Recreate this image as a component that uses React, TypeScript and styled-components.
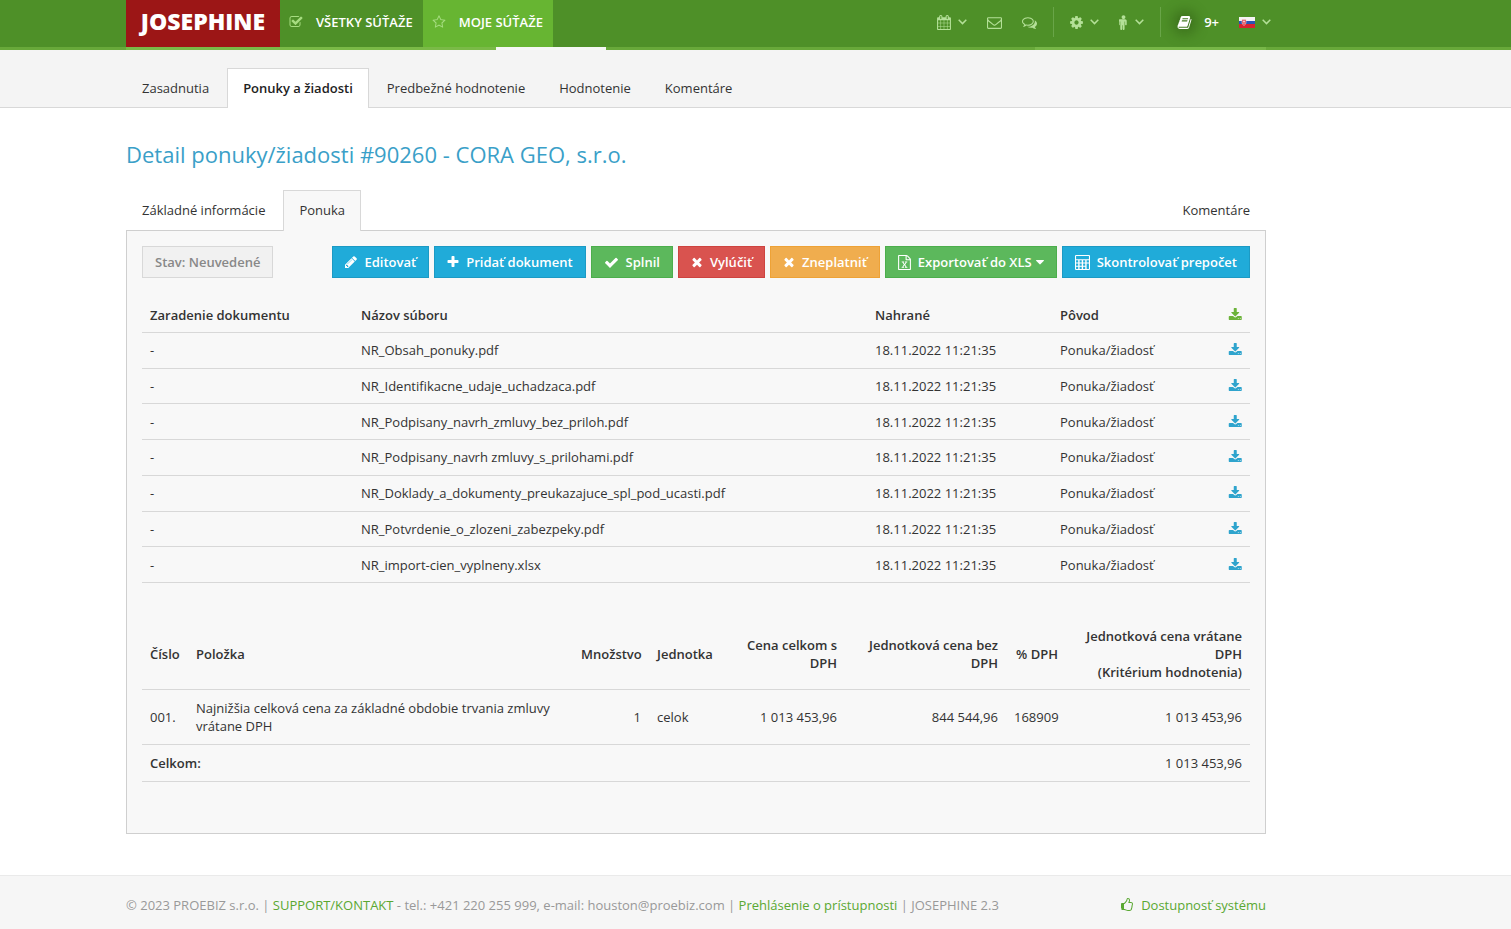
import React from "react";
import styled, { createGlobalStyle, css } from "styled-components";

const GlobalStyle = createGlobalStyle`
  *, *::before, *::after { box-sizing: border-box; }
  html, body, #root { height: 100%; }
  body {
    margin: 0;
    background: #ffffff;
    color: #333333;
    font: 13px/18px "Open Sans", "Noto Sans", sans-serif;
  }
  a { text-decoration: none; color: inherit; }
  button { font: inherit; cursor: pointer; }
`;

/* ---------- icons (1792-unit grid) ---------- */

const paths = {
  check:
    "M1671 566q0 40-28 68l-724 724-136 136q-28 28-68 28t-68-28l-136-136-362-362q-28-28-28-68t28-68l136-136q28-28 68-28t68 28l294 295 656-657q28-28 68-28t68 28l136 136q28 28 28 68z",
  plus:
    "M1600 736v192q0 40-28 68t-68 28h-416v416q0 40-28 68t-68 28h-192q-40 0-68-28t-28-68v-416h-416q-40 0-68-28t-28-68v-192q0-40 28-68t68-28h416v-416q0-40 28-68t68-28h192q40 0 68 28t28 68v416h416q40 0 68 28t28 68z",
  times:
    "M1490 1322q0 40-28 68l-136 136q-28 28-68 28t-68-28l-294-294-294 294q-28 28-68 28t-68-28l-136-136q-28-28-28-68t28-68l294-294-294-294q-28-28-28-68t28-68l136-136q28-28 68-28t68 28l294 294 294-294q28-28 68-28t68 28l136 136q28 28 28 68t-28 68l-294 294 294 294q28 28 28 68z",
  pencil:
    "M491 1536l91-91-235-235-91 91v107h128v128h107zm523-928q0-22-22-22-10 0-17 7l-542 542q-7 7-7 17 0 22 22 22 10 0 17-7l542-542q7-7 7-17zm-54-192l416 416-832 832h-416v-416zm683 96q0 53-37 90l-166 166-416-416 166-165q36-38 90-38 53 0 91 38l235 234q37 39 37 91z",
  caret: "M1408 704q0 26-19 45l-448 448q-19 19-45 19t-45-19l-448-448q-19-19-19-45t19-45 45-19h896q26 0 45 19t19 45z",
  cog:
    "M1152 896q0-106-75-181t-181-75-181 75-75 181 75 181 181 75 181-75 75-181zm512-109v222q0 12-8 23t-20 13l-185 28q-19 54-39 91 35 50 107 138 10 12 10 25t-9 23q-27 37-99 108t-94 71q-12 0-26-9l-138-108q-44 23-91 38-16 136-29 186-7 28-36 28h-222q-14 0-24.5-8.5t-11.5-21.5l-28-184q-49-16-90-37l-141 107q-10 9-25 9-14 0-25-11-126-114-165-168-7-10-7-23 0-12 8-23 15-21 51-66.5t54-70.5q-27-50-41-99l-183-27q-13-2-21-12.5t-8-23.5v-222q0-12 8-23t19-13l186-28q14-46 39-92-40-57-107-138-10-12-10-24 0-10 9-23 26-36 98.5-107.5t94.5-71.5q13 0 26 10l138 107q44-23 91-38 16-136 29-186 7-28 36-28h222q14 0 24.5 8.5t11.5 21.5l28 184q49 16 90 37l142-107q9-9 24-9 13 0 25 10 129 119 165 170 7 8 7 22 0 12-8 23-15 21-51 66.5t-54 70.5q26 50 41 98l183 28q13 2 21 12.5t8 23.5z",
  envelope:
    "M1664 1504v-768q-32 36-69 66-268 206-426 338-51 43-83 67t-86.5 48.5-102.5 24.5h-2q-48 0-102.5-24.5t-86.5-48.5-83-67q-158-132-426-338-37-30-69-66v768q0 13 9.5 22.5t22.5 9.5h1472q13 0 22.5-9.5t9.5-22.5zm0-1051v-24.5l-.5-13-3-12.5-5.5-9-9-7.5-14-2.5h-1472q-13 0-22.5 9.5t-9.5 22.5q0 168 147 284 193 152 401 317 6 5 35 29.5t46 37.5 44.5 31.5 50.5 27.5 43 9h2q20 0 43-9t50.5-27.5 44.5-31.5 46-37.5 35-29.5q208-165 401-317 54-43 100.5-115.5t46.5-131.5zm128-37v1088q0 66-47 113t-113 47h-1472q-66 0-113-47t-47-113v-1088q0-66 47-113t113-47h1472q66 0 113 47t47 113z",
  comments:
    "M704 384q-153 0-286 52t-211.5 141-78.5 191q0 82 53 158t149 132l97 56-35 84q34-20 62-39l44-31 53 10q78 14 153 14 153 0 286-52t211.5-141 78.5-191-78.5-191-211.5-141-286-52zm0-128q191 0 353.5 68.5t256.5 186.5 94 257-94 257-256.5 186.5-353.5 68.5q-86 0-176-16-124 88-278 128-36 9-86 16h-3q-11 0-20.5-8t-11.5-21q-1-3-1-6.5t.5-6.5 2-6l2.5-5 3.5-5.5 4-5 4.5-5 4-4.5q5-6 23-25t26-29.5 22.5-29 25-38.5 20.5-44q-124-72-195-177t-71-224q0-139 94-257t256.5-186.5 353.5-68.5zm822 1169q10 24 20.5 44t25 38.5 22.5 29 26 29.5 23 25q1 1 4 4.5t4.5 5 4 5 3.5 5.5l2.5 5 2 6 .5 6.5-1 6.5q-3 14-13 22t-22 7q-50-7-86-16-154-40-278-128-90 16-176 16-271 0-472-132 58 4 88 4 161 0 309-45t264-129q125-92 192-212t67-254q0-77-23-152 129 71 204 178t75 230q0 120-71 224.5t-195 176.5z",
  star:
    "M1201 1004l306-297-422-62-189-382-189 382-422 62 306 297-73 421 378-199 377 199zm527-357q0 22-26 48l-363 354 86 500q1 7 1 20 0 50-41 50-19 0-40-12l-449-236-449 236q-22 12-40 12-21 0-31.5-14.5t-10.5-35.5q0-6 2-20l86-500-364-354q-25-27-25-48 0-37 56-46l502-73 225-455q19-41 49-41t49 41l225 455 502 73q56 9 56 46z",
  checkSquare:
    "M1472 930v318q0 119-84.5 203.5t-203.5 84.5h-832q-119 0-203.5-84.5t-84.5-203.5v-832q0-119 84.5-203.5t203.5-84.5h832q63 0 117 25 15 7 18 23 3 17-9 29l-49 49q-10 10-23 10-3 0-9-2-23-6-45-6h-832q-66 0-113 47t-47 113v832q0 66 47 113t113 47h832q66 0 113-47t47-113v-254q0-13 9-22l64-64q10-10 23-10 6 0 12 3 20 8 20 29zm231-489l-814 814q-24 24-57 24t-57-24l-430-430q-24-24-24-57t24-57l110-110q24-24 57-24t57 24l263 263 647-647q24-24 57-24t57 24l110 110q24 24 24 57t-24 57z",
  calendar:
    "M192 1664h288v-288h-288v288zm352 0h320v-288h-320v288zm-352-352h288v-320h-288v320zm352 0h320v-320h-320v320zm-352-384h288v-288h-288v288zm736 736h320v-288h-320v288zm-384-736h320v-288h-320v288zm768 736h288v-288h-288v288zm-384-352h320v-320h-320v320zm-352-864v-288q0-13-9.5-22.5t-22.5-9.5h-64q-13 0-22.5 9.5t-9.5 22.5v288q0 13 9.5 22.5t22.5 9.5h64q13 0 22.5-9.5t9.5-22.5zm736 864h288v-320h-288v320zm-384-384h320v-288h-320v288zm384 0h288v-288h-288v288zm32-480v-288q0-13-9.5-22.5t-22.5-9.5h-64q-13 0-22.5 9.5t-9.5 22.5v288q0 13 9.5 22.5t22.5 9.5h64q13 0 22.5-9.5t9.5-22.5zm384-64v1280q0 52-38 90t-90 38h-1408q-52 0-90-38t-38-90v-1280q0-52 38-90t90-38h128v-96q0-66 47-113t113-47h64q66 0 113 47t47 113v96h384v-96q0-66 47-113t113-47h64q66 0 113 47t47 113v96h128q52 0 90 38t38 90z",
  male:
    "M1280 704v416q0 40-28 68t-68 28-68-28-28-68v-352h-64v912q0 46-33 79t-79 33-79-33-33-79v-464h-64v464q0 46-33 79t-79 33-79-33-33-79v-912h-64v352q0 40-28 68t-68 28-68-28-28-68v-416q0-80 56-136t136-56h640q80 0 136 56t56 136zm-160-448q0 93-65.5 158.5t-158.5 65.5-158.5-65.5-65.5-158.5 65.5-158.5 158.5-65.5 158.5 65.5 65.5 158.5z",
  book:
    "M1703 478q40 57 18 129l-275 906q-19 64-76.5 107.5t-122.5 43.5h-923q-77 0-148.5-53.5t-99.5-131.5q-24-67-2-127 0-4 3-27t4-37q1-8-3-21.5t-3-19.5q2-11 8-21t16.5-23.5 16.5-23.5q23-38 45-91.5t30-91.5q3-10 .5-30t-.5-28q3-11 17-28t17-23q21-36 42-92t25-90q1-9-2.5-32t.5-28q4-13 22-30.5t22-22.5q19-26 42.5-84.5t27.5-96.5q1-8-3-25.5t-2-26.5q2-8 9-18t18-23 17-21q8-12 16.5-30.5t15-35 16-36 19.5-32 26.5-23.5 36-11.5 47.5 5.5l-1 3q38-9 51-9h761q74 0 114 56t18 130l-274 906q-36 119-71.5 153.5t-128.5 34.5h-869q-27 0-38 15-11 16-1 43 24 70 144 70h923q29 0 56-15.5t35-41.5l300-987q7-22 5-57 38 15 59 43zm-1064 2q-4 13 2 22.5t20 9.5h608q13 0 25.5-9.5t16.5-22.5l21-64q4-13-2-22.5t-20-9.5h-608q-13 0-25.5 9.5t-16.5 22.5zm-83 256q-4 13 2 22.5t20 9.5h608q13 0 25.5-9.5t16.5-22.5l21-64q4-13-2-22.5t-20-9.5h-608q-13 0-25.5 9.5t-16.5 22.5z",
  download:
    "M1344 1344q0-26-19-45t-45-19-45 19-19 45 19 45 45 19 45-19 19-45zm256 0q0-26-19-45t-45-19-45 19-19 45 19 45 45 19 45-19 19-45zm128-224v320q0 40-28 68t-68 28h-1472q-40 0-68-28t-28-68v-320q0-40 28-68t68-28h465l135 136q58 56 136 56t136-56l136-136h464q40 0 68 28t28 68zm-325-569q17 41-14 70l-448 448q-18 19-45 19t-45-19l-448-448q-31-29-14-70 17-39 59-39h256v-448q0-26 19-45t45-19h256q26 0 45 19t19 45v448h256q42 0 59 39z",
  excel:
    "M1596 380q28 28 48 76t20 88v1152q0 40-28 68t-68 28h-1344q-40 0-68-28t-28-68v-1600q0-40 28-68t68-28h896q40 0 88 20t76 48zm-444-244v376h376q-10-29-22-41l-313-313q-12-12-41-22zm384 1528v-1024h-416q-40 0-68-28t-28-68v-416h-768v1536h1280zm-979-234v106h281v-106h-75l103-161q5-7 10-16.5t7.5-13.5 3.5-4h2q1 4 5 10 2 4 4.5 7.5t6 8 6.5 8.5l107 161h-76v106h291v-106h-68l-192-273 195-282h67v-107h-279v107h74l-103 159q-4 7-10 16.5t-9 13.5l-2 3h-2q-1-4-5-10-6-11-17-23l-106-159h76v-107h-290v107h68l189 272-194 283h-68z",
  calculator:
    "M128 0h1536q128 0 128 128v1536q0 128-128 128h-1536q-128 0-128-128v-1536q0-128 128-128zm0 128v384h1536v-384zm0 512v256h256v-256zm420 0v256h256v-256zm420 0v256h256v-256zm420 0v256h276v-256zm-1260 384v256h256v-256zm420 0v256h256v-256zm420 0v256h256v-256zm-840 384v256h256v-256zm420 0v256h256v-256zm420 0v256h256v-256zm420-384v640h276v-640z",
  thumb:
    "M256 1408q0-26-19-45t-45-19-45 19-19 45 19 45 45 19 45-19 19-45zm1280-640q0-51-39-89.5t-89-38.5h-352q0-58 48-159.5t48-160.5q0-98-32-145t-128-47q-26 26-38 85t-30.5 125.5-59.5 109.5q-22 23-77 91-4 5-23 30t-31.5 41-34.5 42.5-40 44-38.5 35.5-40 27-35.5 9h-32v640h32q13 0 31.5 3t33 6.5 38 11 35 11.5 35.5 12.5 29 10.5q211 73 342 73h121q192 0 192-167 0-26-5-56 30-16 47.5-52.5t17.5-73.5-18-69q53-50 53-119 0-25-10-55.5t-25-47.5q32-1 53.5-47t21.5-81zm128-1q0 89-49 163 9 33 9 69 0 77-38 144 3 21 3 43 0 101-60 178 1 139-85 219.5t-227 80.5h-129q-96 0-189.5-22.5t-216.5-65.5q-116-40-138-40h-288q-53 0-90.5-37.5t-37.5-90.5v-640q0-53 37.5-90.5t90.5-37.5h274q36-24 137-155 58-75 107-128 24-25 35.5-85.5t30.5-126.5 62-108q39-37 90-37 84 0 151 32.5t102 101.5 35 186q0 93-48 192h176q104 0 180 76t76 179z",
};

type IconName = keyof typeof paths;

/* Narrow glyphs are cropped to their own advance width: [x offset, width] in grid units. */
const advance: Partial<Record<IconName, [number, number]>> = {
  pencil: [128, 1536],
  plus: [128, 1536],
  times: [128, 1536],
  excel: [128, 1536],
  thumb: [0, 1664],
  cog: [128, 1536],
  male: [384, 1024],
  calendar: [64, 1664],
  download: [0, 1728],
  caret: [384, 1024],
};

const Svg = styled.svg`
  display: block;
  flex: none;
  fill: currentColor;
`;

function Icon({ name, size = 14 }: { name: IconName; size?: number }) {
  const [x, w] = advance[name] ?? [0, 1792];
  return (
    <Svg width={Math.round((size * w) / 1792)} height={size} viewBox={`${x} 0 ${w} 1792`} aria-hidden="true">
      <path fillRule={name === "calculator" ? "evenodd" : undefined} d={paths[name]} />
    </Svg>
  );
}

function Chevron() {
  return (
    <Svg width="9" height="6" viewBox="0 0 9 6" aria-hidden="true">
      <path d="M.7.8 4.5 4.6 8.3.8" fill="none" stroke="currentColor" strokeWidth="1.5" />
    </Svg>
  );
}

function Flag() {
  return (
    <Svg width="16" height="11" viewBox="0 0 16 11" aria-hidden="true">
      <rect width="16" height="4" fill="#f4f4f4" />
      <rect y="4" width="16" height="3" fill="#2a55b5" />
      <rect y="7" width="16" height="4" fill="#d8232f" />
      <path d="M3 2.5h4v3q0 2-2 3q-2-1-2-3z" fill="#e03a44" stroke="#f3d6dc" strokeWidth=".6" />
      <path d="M5 3v4M4 4.5h2" stroke="#fff" strokeWidth=".6" />
    </Svg>
  );
}

/* ---------- page frame ---------- */

const Page = styled.div`
  min-height: 100%;
  display: flex;
  flex-direction: column;
`;

const Container = styled.div`
  width: 100%;
  max-width: 1266px;
  padding-left: 126px;
`;

const Header = styled.header`
  background: #4e9028;
`;

const HeaderRow = styled(Container)`
  display: flex;
  height: 47px;
`;

const Strip = styled.div`
  background: #68a93a;
`;

const StripRow = styled(Container)`
  display: flex;
  height: 3px;
`;

const StripPart = styled.span<{ $w: number; $bg: string; $end?: boolean }>`
  width: ${(p) => p.$w}px;
  margin-left: ${(p) => (p.$end ? "auto" : "0")};
  background: ${(p) => p.$bg};
`;

const Logo = styled.a`
  width: 154px;
  display: flex;
  align-items: center;
  justify-content: center;
  padding-bottom: 5px;
  background: #9c1616;
  color: #ffffff;
  font-size: 23px;
  line-height: 24px;
  font-weight: 800;
`;

const MainLink = styled.a<{ $active?: boolean }>`
  display: flex;
  align-items: center;
  gap: 13px;
  padding: 0 10px 3px 9px;
  color: #ffffff;
  font-weight: 600;
  background: ${(p) => (p.$active ? "#67b532" : "transparent")};
  svg { color: #a6dc80; }
`;

const Tools = styled.div`
  display: flex;
  align-items: center;
  margin: 0 -15px 0 auto;
  padding-bottom: 3px;
`;

const Tool = styled.button<{ $bright?: boolean }>`
  display: flex;
  align-items: center;
  gap: 7px;
  height: 30px;
  padding: 0 10px;
  border: 0;
  background: none;
  font-weight: 600;
  color: ${(p) => (p.$bright ? "#ffffff" : "#b4e098")};
`;

const BookMark = styled.span`
  margin-right: 5px;
  box-shadow: 0 0 12px 5px rgba(40, 80, 15, 0.4);
  background: rgba(40, 80, 15, 0.35);
  border-radius: 6px;
`;

const Divider = styled.span`
  width: 1px;
  height: 30px;
  margin: 0 6px;
  background: #69a548;
`;

const SubNav = styled.nav`
  height: 58px;
  background: #f4f4f4;
  border-bottom: 1px solid #d8d8d8;
`;

const TabRow = styled(Container)`
  display: flex;
  gap: 2px;
  padding-top: 18px;
`;

const tab = css`
  height: 40px;
  padding: 10px 15px 0;
  border: 1px solid transparent;
  border-bottom: 0;
  white-space: nowrap;
`;

const PageTab = styled.a<{ $active?: boolean }>`
  ${tab}
  ${(p) =>
    p.$active &&
    css`
      background: #ffffff;
      border-color: #d8d8d8;
      font-weight: 600;
      color: #222222;
    `}
`;

const Main = styled.main`
  flex: 1;
`;

const Title = styled.h1`
  margin: 31px 0 21px;
  font-size: 22px;
  line-height: 30px;
  font-weight: 400;
  color: #3a9fc8;
`;

const PanelTabs = styled.nav`
  display: flex;
  gap: 2px;
`;

const PanelTab = styled.a<{ $active?: boolean; $right?: boolean }>`
  ${tab}
  margin-left: ${(p) => (p.$right ? "auto" : "0")};
  ${(p) =>
    p.$active &&
    css`
      height: 41px;
      margin-bottom: -1px;
      background: #f8f8f8;
      border-color: #d8d8d8;
      position: relative;
    `}
`;

const Panel = styled.section`
  padding: 15px 15px 51px;
  background: #f8f8f8;
  border: 1px solid #cfcfcf;
`;

const Toolbar = styled.div`
  display: flex;
  gap: 5px;
  margin-bottom: 20px;
`;

const tones = {
  blue: ["#20abd9", "#1c9ac4"],
  green: ["#5cb85c", "#4cae4c"],
  red: ["#d9534f", "#ce433f"],
  orange: ["#f0ad4e", "#eea236"],
};

const Action = styled.button<{ $tone: keyof typeof tones }>`
  display: flex;
  align-items: center;
  gap: 7px;
  height: 32px;
  padding: 0 12px;
  border: 1px solid ${(p) => tones[p.$tone][1]};
  background: ${(p) => tones[p.$tone][0]};
  color: #ffffff;
  font-weight: 600;
  white-space: nowrap;
`;

const CaretBox = styled.span`
  margin-left: -3px;
`;

const Status = styled.span`
  height: 32px;
  margin-right: auto;
  padding: 6px 12px;
  border: 1px solid #d8d8d8;
  background: #f1f1f1;
  color: #888888;
  font-weight: 600;
`;

/* ---------- tables ---------- */

const Table = styled.table`
  width: 100%;
  border-collapse: collapse;
  table-layout: fixed;
`;

const FilesTable = styled(Table)`
  height: 285px;
  margin-bottom: 36px;
`;

const ItemsTable = styled(Table)`
  height: 163px;
`;

const Col = styled.col<{ $w?: number }>`
  width: ${(p) => (p.$w ? `${p.$w}px` : "auto")};
`;

const cell = css<{ $right?: boolean }>`
  padding: 8px;
  border-bottom: 1px solid #d8d8d8;
  vertical-align: middle;
  text-align: ${(p) => (p.$right ? "right" : "left")};
`;

const Th = styled.th`
  ${cell}
  font-weight: 600;
`;

const Td = styled.td`
  ${cell}
`;

const Download = styled.a<{ $all?: boolean }>`
  display: flex;
  justify-content: flex-end;
  color: ${(p) => (p.$all ? "#6cb33a" : "#2fa4cd")};
`;

/* ---------- footer ---------- */

const Footer = styled.footer`
  height: 54px;
  background: #f6f6f6;
  border-top: 1px solid #eaeaea;
`;

const FooterRow = styled(Container)`
  display: flex;
  justify-content: space-between;
  padding-top: 20px;
  color: #999999;
`;

const GreenLink = styled.a`
  display: inline-flex;
  gap: 8px;
  align-items: center;
  color: #5aa832;
`;

const files = [
  "NR_Obsah_ponuky.pdf",
  "NR_Identifikacne_udaje_uchadzaca.pdf",
  "NR_Podpisany_navrh_zmluvy_bez_priloh.pdf",
  "NR_Podpisany_navrh zmluvy_s_prilohami.pdf",
  "NR_Doklady_a_dokumenty_preukazajuce_spl_pod_ucasti.pdf",
  "NR_Potvrdenie_o_zlozeni_zabezpeky.pdf",
  "NR_import-cien_vyplneny.xlsx",
];

export default function App() {
  return (
    <Page>
      <GlobalStyle />
      <Header>
        <HeaderRow>
          <Logo href="#">JOSEPHINE</Logo>
          <MainLink href="#">
            <Icon name="checkSquare" />
            VŠETKY SÚŤAŽE
          </MainLink>
          <MainLink href="#" $active>
            <Icon name="star" />
            MOJE SÚŤAŽE
          </MainLink>
          <Tools>
            <Tool aria-label="Kalendár"><Icon name="calendar" size={15} /><Chevron /></Tool>
            <Tool aria-label="Správy"><Icon name="envelope" size={15} /></Tool>
            <Tool aria-label="Komentáre"><Icon name="comments" size={15} /></Tool>
            <Divider />
            <Tool aria-label="Nastavenia"><Icon name="cog" size={15} /><Chevron /></Tool>
            <Tool aria-label="Používateľ"><Icon name="male" size={15} /><Chevron /></Tool>
            <Divider />
            <Tool $bright>
              <BookMark><Icon name="book" size={15} /></BookMark>
              9+
            </Tool>
            <Tool aria-label="Jazyk"><Flag /><Chevron /></Tool>
          </Tools>
        </HeaderRow>
        <Strip>
          <StripRow>
            <StripPart $w={370} $bg="#7aba47" />
            <StripPart $w={110} $bg="#f6f8f5" />
            <StripPart $w={231} $bg="#77b748" $end />
          </StripRow>
        </Strip>
      </Header>

      <SubNav>
        <TabRow>
          <PageTab href="#">Zasadnutia</PageTab>
          <PageTab href="#" $active>Ponuky a žiadosti</PageTab>
          <PageTab href="#">Predbežné hodnotenie</PageTab>
          <PageTab href="#">Hodnotenie</PageTab>
          <PageTab href="#">Komentáre</PageTab>
        </TabRow>
      </SubNav>

      <Main>
        <Container>
          <Title>Detail ponuky/žiadosti #90260 - CORA GEO, s.r.o.</Title>
          <PanelTabs>
            <PanelTab href="#">Základné informácie</PanelTab>
            <PanelTab href="#" $active>Ponuka</PanelTab>
            <PanelTab href="#" $right>Komentáre</PanelTab>
          </PanelTabs>
          <Panel>
            <Toolbar>
              <Status>Stav: Neuvedené</Status>
              <Action $tone="blue"><Icon name="pencil" />Editovať</Action>
              <Action $tone="blue"><Icon name="plus" />Pridať dokument</Action>
              <Action $tone="green"><Icon name="check" size={15} />Splnil</Action>
              <Action $tone="red"><Icon name="times" />Vylúčiť</Action>
              <Action $tone="orange"><Icon name="times" />Zneplatniť</Action>
              <Action $tone="green">
                <Icon name="excel" size={15} />Exportovať do XLS
                <CaretBox><Icon name="caret" /></CaretBox>
              </Action>
              <Action $tone="blue"><Icon name="calculator" size={15} />Skontrolovať prepočet</Action>
            </Toolbar>

            <FilesTable>
              <colgroup>
                <Col $w={211} />
                <Col />
                <Col $w={185} />
                <Col $w={151} />
                <Col $w={47} />
              </colgroup>
              <thead>
                <tr>
                  <Th>Zaradenie dokumentu</Th>
                  <Th>Názov súboru</Th>
                  <Th>Nahrané</Th>
                  <Th>Pôvod</Th>
                  <Th><Download href="#" $all aria-label="Stiahnuť všetko"><Icon name="download" /></Download></Th>
                </tr>
              </thead>
              <tbody>
                {files.map((name) => (
                  <tr key={name}>
                    <Td>-</Td>
                    <Td>{name}</Td>
                    <Td>18.11.2022 11:21:35</Td>
                    <Td>Ponuka/žiadosť</Td>
                    <Td><Download href="#" aria-label={`Stiahnuť ${name}`}><Icon name="download" /></Download></Td>
                  </tr>
                ))}
              </tbody>
            </FilesTable>

            <ItemsTable>
              <colgroup>
                <Col $w={46} />
                <Col />
                <Col $w={76} />
                <Col $w={72} />
                <Col $w={124} />
                <Col $w={161} />
                <Col $w={60} />
                <Col $w={184} />
              </colgroup>
              <thead>
                <tr>
                  <Th>Číslo</Th>
                  <Th>Položka</Th>
                  <Th $right>Množstvo</Th>
                  <Th>Jednotka</Th>
                  <Th $right>Cena celkom s DPH</Th>
                  <Th $right>Jednotková cena bez DPH</Th>
                  <Th $right>% DPH</Th>
                  <Th $right>Jednotková cena vrátane DPH<br />(Kritérium hodnotenia)</Th>
                </tr>
              </thead>
              <tbody>
                <tr>
                  <Td>001.</Td>
                  <Td>Najnižšia celková cena za základné obdobie trvania zmluvy vrátane DPH</Td>
                  <Td $right>1</Td>
                  <Td>celok</Td>
                  <Td $right>1 013 453,96</Td>
                  <Td $right>844 544,96</Td>
                  <Td $right>168909</Td>
                  <Td $right>1 013 453,96</Td>
                </tr>
                <tr>
                  <Th colSpan={7} scope="row">Celkom:</Th>
                  <Td $right>1 013 453,96</Td>
                </tr>
              </tbody>
            </ItemsTable>
          </Panel>
        </Container>
      </Main>

      <Footer>
        <FooterRow>
          <span>
            © 2023 PROEBIZ s.r.o. | <GreenLink href="#">SUPPORT/KONTAKT</GreenLink> - tel.: +421 220 255 999, e-mail:
            houston@proebiz.com | <GreenLink href="#">Prehlásenie o prístupnosti</GreenLink> | JOSEPHINE 2.3
          </span>
          <GreenLink href="#"><Icon name="thumb" />Dostupnosť systému</GreenLink>
        </FooterRow>
      </Footer>
    </Page>
  );
}
